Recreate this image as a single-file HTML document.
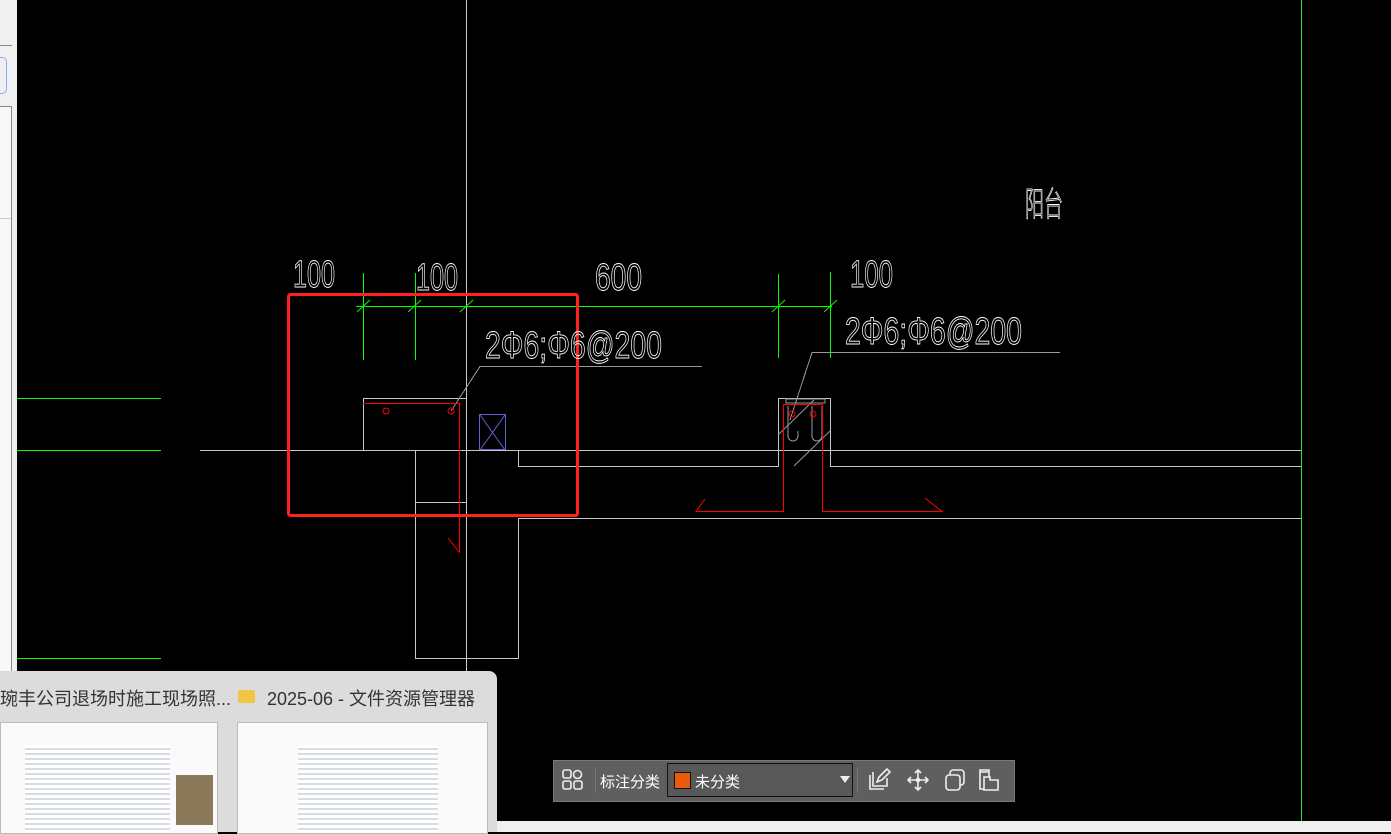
<!DOCTYPE html>
<html><head><meta charset="utf-8"><style>
html,body{margin:0;padding:0;width:1391px;height:832px;overflow:hidden;background:#000;font-family:"Liberation Sans","Noto Sans CJK SC",sans-serif}
.abs{position:absolute}
</style></head><body>
<div class="abs" style="left:0;top:0;width:17px;height:832px;background:#f0f0f0"></div>
<div class="abs" style="left:0;top:45px;width:12px;height:1px;background:#888"></div>
<div class="abs" style="left:-6px;top:57px;width:11px;height:35px;border:1px solid #8aa8ff;border-radius:5px"></div>
<div class="abs" style="left:0;top:106px;width:11px;height:726px;background:#f8f8f8;border-right:1px solid #888;border-top:1px solid #888"></div>
<div class="abs" style="left:0;top:218px;width:11px;height:1px;background:#ccc"></div>
<svg class="abs" style="left:0;top:0" width="1391" height="832" viewBox="0 0 1391 832">
<g stroke="#c8c8c8" stroke-width="1" fill="none" shape-rendering="crispEdges">
<line x1="466.5" y1="0" x2="466.5" y2="832"/>
<line x1="200" y1="450.5" x2="1301" y2="450.5"/>
<polyline points="363.5,450 363.5,398.5 466,398.5"/>
<polyline points="415.5,450 415.5,658.5 518.5,658.5 518.5,518.5 1301,518.5"/>
<line x1="415" y1="502.5" x2="466" y2="502.5"/>
<polyline points="518.5,450 518.5,466.5 778.5,466.5 778.5,398.5 830.5,398.5 830.5,466.5 1301,466.5"/>
<polyline stroke="#999" points="451,411 480,366.5 702,366.5"/>
<polyline stroke="#999" points="790,420 812,352.5 1060,352.5"/>
<rect x="786" y="399" width="39" height="4" stroke="#999"/>
</g>
<line x1="1301.5" y1="0" x2="1301.5" y2="821" stroke="#33dd33" stroke-width="1"/>
<g stroke="#999" stroke-width="1" fill="none">
<path d="M788 406v30a5 5 0 0 0 10 0v-5M812 406v30a5 5 0 0 0 10 0v-30"/>
<path d="M778 435l36-35M794 466l36-35"/>
</g>
<g stroke="#00ff00" stroke-width="1" fill="none" shape-rendering="crispEdges">
<line x1="356" y1="306.5" x2="832" y2="306.5"/>
<line x1="363.5" y1="273" x2="363.5" y2="360"/>
<line x1="415.5" y1="273" x2="415.5" y2="360"/>
<line x1="778.5" y1="274" x2="778.5" y2="358"/>
<line x1="830.5" y1="272" x2="830.5" y2="358"/>
<line x1="17" y1="398.5" x2="161" y2="398.5"/>
<line x1="17" y1="450.5" x2="161" y2="450.5"/>
<line x1="17" y1="658.5" x2="161" y2="658.5"/>
</g>
<g stroke="#00ff00" stroke-width="1">
<line x1="357" y1="312" x2="370" y2="300"/><line x1="408" y1="312" x2="421" y2="300"/>
<line x1="460" y1="312" x2="473" y2="300"/><line x1="772" y1="312" x2="785" y2="300"/>
<line x1="824" y1="312" x2="837" y2="300"/>
</g>
<g stroke="#ff0000" stroke-width="1" fill="none">
<polyline points="363,403.5 459.5,403.5 459.5,553"/>
<line x1="448" y1="538" x2="459" y2="552"/>
<circle cx="386" cy="411" r="3"/><circle cx="451" cy="411" r="3"/>
<circle cx="792" cy="414" r="3"/><circle cx="813" cy="414" r="3"/>
<polyline points="705,499 696,511.5 783.5,511.5 783.5,404.5 822.5,404.5 822.5,511.5 942,511.5 925,498"/>
</g>
<g stroke="#6060d0" fill="none"><rect x="479.5" y="414.5" width="26" height="35"/><path d="M480 415l25 35M505 415l-25 35"/></g>
<rect x="288.5" y="294.5" width="289" height="221" rx="2" fill="none" stroke="#ff2020" stroke-width="3"/>
<g fill="none" stroke="#fff" stroke-width="0.9" font-family="'Liberation Sans Narrow','Liberation Sans',sans-serif">
<text x="293" y="287" font-size="38" textLength="42" lengthAdjust="spacingAndGlyphs">100</text>
<text x="416" y="290" font-size="38" textLength="42" lengthAdjust="spacingAndGlyphs">100</text>
<text x="595" y="290" font-size="38" textLength="47" lengthAdjust="spacingAndGlyphs">600</text>
<text x="850" y="287" font-size="38" textLength="43" lengthAdjust="spacingAndGlyphs">100</text>
<text x="485" y="358" font-size="38" textLength="177" lengthAdjust="spacingAndGlyphs">2Φ6;Φ6@200</text>
<text x="845" y="344" font-size="38" textLength="177" lengthAdjust="spacingAndGlyphs">2Φ6;Φ6@200</text>
<text x="1025" y="216" font-size="34" font-family="'Noto Sans CJK SC',sans-serif" font-weight="200" textLength="38" lengthAdjust="spacingAndGlyphs">阳台</text>
</g>
</svg>
<div class="abs" style="left:0;top:821px;width:1391px;height:11px;background:#f0f0f0"></div>
<div class="abs" style="left:0;top:671px;width:497px;height:161px;background:#dcdcdc;border-top-right-radius:8px"></div>
<div class="abs" style="left:0;top:685px;font-size:18px;color:#333;white-space:nowrap">琬丰公司退场时施工现场照...</div>
<div class="abs" style="left:238px;top:690px;width:17px;height:13px;background:#f2c546;border-radius:2px"></div>
<div class="abs" style="left:267px;top:685px;font-size:18px;color:#333;white-space:nowrap">2025-06 - 文件资源管理器</div>
<div class="abs" style="left:0;top:722px;width:216px;height:110px;background:#fafafa;border:1px solid #bbb"></div>
<div class="abs" style="left:25px;top:745px;width:145px;height:87px;background:repeating-linear-gradient(#fff 0 3px,#d8dce4 3px 5px)"></div>
<div class="abs" style="left:176px;top:775px;width:37px;height:50px;background:#8a7a5a"></div>
<div class="abs" style="left:237px;top:722px;width:249px;height:110px;background:#fafafa;border:1px solid #bbb"></div>
<div class="abs" style="left:298px;top:745px;width:140px;height:87px;background:repeating-linear-gradient(#fff 0 3px,#d8dce4 3px 5px)"></div>
<div class="abs" style="left:553px;top:760px;width:460px;height:40px;background:#5f5f5f;border:1px solid #7a7a7a"></div>
<svg class="abs" style="left:562px;top:769px" width="22" height="22" viewBox="0 0 22 22" fill="none" stroke="#eee" stroke-width="1.6"><rect x="1" y="1" width="8" height="8" rx="2"/><rect x="1" y="12" width="8" height="8" rx="2"/><rect x="12" y="12" width="8" height="8" rx="2"/><rect x="11.5" y="1.5" width="8" height="8" rx="4" transform="rotate(45 15.5 5.5)"/></svg>
<div class="abs" style="left:595px;top:768px;width:1px;height:25px;background:#777"></div>
<div class="abs" style="left:600px;top:771px;font-size:15px;color:#fff">标注分类</div>
<div class="abs" style="left:667px;top:763px;width:186px;height:34px;background:#585858;border:1px solid #111;box-sizing:border-box"></div>
<div class="abs" style="left:674px;top:772px;width:15px;height:15px;background:#e85a0c;border:1px solid #111"></div>
<div class="abs" style="left:695px;top:771px;font-size:15px;color:#fff">未分类</div>
<div class="abs" style="left:840px;top:776px;width:0;height:0;border-left:5px solid transparent;border-right:5px solid transparent;border-top:7px solid #eee"></div>
<div class="abs" style="left:857px;top:768px;width:1px;height:25px;background:#777"></div>
<svg class="abs" style="left:866px;top:767px" width="140" height="26" viewBox="0 0 140 26" fill="none" stroke="#eee" stroke-width="1.6">
<path d="M4 8v14h14M7 5v14h14v-8M11 15l2-5 8-8 3 3-8 8z"/>
<path d="M52 3v20M42 13h20M49 6l3-3 3 3M49 20l3 3 3-3M45 10l-3 3 3 3M59 10l3 3-3 3"/><circle cx="52" cy="13" r="1.5" fill="#eee"/>
<rect x="80" y="8" width="14" height="15" rx="3"/><path d="M84 8V6a3 3 0 0 1 3-3h8a3 3 0 0 1 3 3v9a3 3 0 0 1-3 3h-1"/>
<path d="M118 22h-4V5h9M118 10h6v3h8v10h-14zM114 5v-2h9v7"/>
</svg>
</body></html>
